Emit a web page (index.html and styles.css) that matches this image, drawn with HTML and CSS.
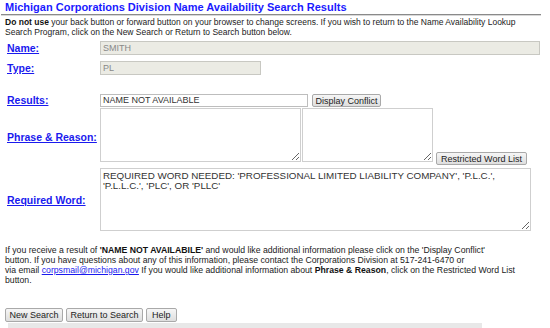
FILE: index.html
```html
<!DOCTYPE html>
<html>
<head>
<meta charset="utf-8">
<link rel="stylesheet" href="styles.css">
</head>
<body>
<div class="page">
  <h1 class="title">Michigan Corporations Division Name Availability Search Results</h1>
  <div class="rule"></div>
  <p class="intro"><b>Do not use</b> your back button or forward button on your browser to change screens. If you wish to return to the Name Availability Lookup<br>Search Program, click on the New Search or Return to Search button below.</p>

  <div class="row row-name">
    <a class="label" href="#">Name:</a>
    <input class="field ro wide" type="text" value="SMITH" readonly>
  </div>
  <div class="row row-type">
    <a class="label" href="#">Type:</a>
    <input class="field ro short" type="text" value="PL" readonly>
  </div>
  <div class="row row-results">
    <a class="label" href="#">Results:</a>
    <input class="field res" type="text" value="NAME NOT AVAILABLE" readonly>
    <button class="btn btn-dc">Display Conflict</button>
  </div>
  <div class="row row-phrase">
    <a class="label" href="#">Phrase &amp; Reason:</a>
    <textarea class="ta ta1"></textarea>
    <textarea class="ta ta2"></textarea>
    <button class="btn btn-rw">Restricted Word List</button>
  </div>
  <div class="row row-req">
    <a class="label" href="#">Required Word:</a>
    <textarea class="ta ta3">REQUIRED WORD NEEDED: 'PROFESSIONAL LIMITED LIABILITY COMPANY', 'P.L.C.', 'P.L.L.C.', 'PLC', OR 'PLLC'</textarea>
  </div>

  <p class="info">If you receive a result of <b>'NAME NOT AVAILABILE'</b> and would like additional information please click on the 'Display Conflict'<br>button. If you have questions about any of this information, please contact the Corporations Division at 517-241-6470 or<br>via email <a href="#" class="mail">corpsmail@michigan.gov</a> If you would like additional information about <b>Phrase &amp; Reason</b>, click on the Restricted Word List<br>button.</p>

  <div class="actions">
    <button class="btn">New Search</button>
    <button class="btn">Return to Search</button>
    <button class="btn btn-help">Help</button>
  </div>
  <div class="bar"></div>
</div>
</body>
</html>
```
FILE: styles.css
```css
html, body {
  margin: 0;
  padding: 0;
  background: #fff;
}
body {
  font-family: "Liberation Sans", Arial, sans-serif;
  color: #222;
  width: 550px;
  height: 328px;
  overflow: hidden;
}
.page {
  padding: 0 0 0 5px;
}
.title {
  margin: 0;
  padding-top: 1px;
  font-size: 11px;
  line-height: 12px;
  font-weight: bold;
  color: #1a1aff;
}
.rule {
  margin: 1px 0 0 -4px;
  width: 540px;
  height: 1px;
  background: #8a8a8a;
  border-bottom: 1px solid #d8d8d8;
}
.intro {
  margin: 1px 0 0 0;
  font-size: 8.5px;
  line-height: 10px;
  color: #222;
  white-space: nowrap;
}
.intro b { color: #111; }
.row {
  display: flex;
  align-items: center;
}
.label {
  width: 93px;
  flex: none;
  padding-left: 2px;
  font-size: 10.5px;
  font-weight: bold;
  color: #1a1aee;
  text-decoration: underline;
}
.field {
  box-sizing: border-box;
  height: 14px;
  margin: 0;
  padding: 0 2px;
  font-family: "Liberation Sans", Arial, sans-serif;
  font-size: 9px;
  outline: none;
}
.ro {
  background: #ebebe4;
  border: 1px solid #c8c8c2;
  color: #888;
}
.wide { width: 440px; }
.short { width: 161px; }
.row-name { margin-top: 4px; height: 14px; }
.row-type { margin-top: 6px; height: 14px; }
.row-results { margin-top: 18px; height: 14px; }
.res {
  width: 208px;
  height: 13px;
  background: #fff;
  border: 1px solid #bdbdbd;
  color: #333;
}
.btn {
  box-sizing: border-box;
  height: 14px;
  margin: 0;
  padding: 0 4px;
  font-family: "Liberation Sans", Arial, sans-serif;
  font-size: 9px;
  line-height: 12px;
  color: #222;
  background: linear-gradient(#f6f6f6, #dedede);
  border: 1px solid #a9a9a9;
  border-radius: 2px;
}
.btn-dc {
  margin-left: 4px;
  width: 69px;
  height: 13px;
  padding: 0;
}
.row-phrase {
  margin-top: 1px;
  height: 58px;
  align-items: center;
}
.ta {
  box-sizing: border-box;
  margin: 0;
  padding: 1px 2px;
  border: 1px solid #cfcfcf;
  font-family: "Liberation Sans", Arial, sans-serif;
  font-size: 9.8px;
  line-height: 10px;
  color: #333;
  outline: none;
  resize: both;
}
.ta1 {
  width: 201px;
  height: 54px;
  align-self: flex-start;
}
.ta2 {
  margin-left: 1px;
  width: 131px;
  height: 54px;
  align-self: flex-start;
}
.btn-rw {
  align-self: flex-end;
  margin-left: 3px;
  margin-bottom: 1px;
  width: 91px;
  height: 13px;
  padding: 0;
}
.row-req {
  margin-top: 2px;
  height: 63px;
}
.ta3 {
  width: 431px;
  height: 63px;
  padding: 2px 2px;
}
.info {
  margin: 14px 0 0 0;
  font-size: 8.7px;
  line-height: 10px;
  color: #222;
}
.info b { color: #111; }
.mail { color: #1a1aee; text-decoration: underline; }
.actions {
  display: flex;
  gap: 3px;
  margin-top: 23px;
}
.actions .btn {
  height: 14px;
  padding: 0 3.5px;
}
.actions .btn-help {
  padding: 0 5px;
}
.bar {
  margin: 1px 0 0 3px;
  width: 474px;
  height: 6px;
  background: #e8e8e8;
}
```
